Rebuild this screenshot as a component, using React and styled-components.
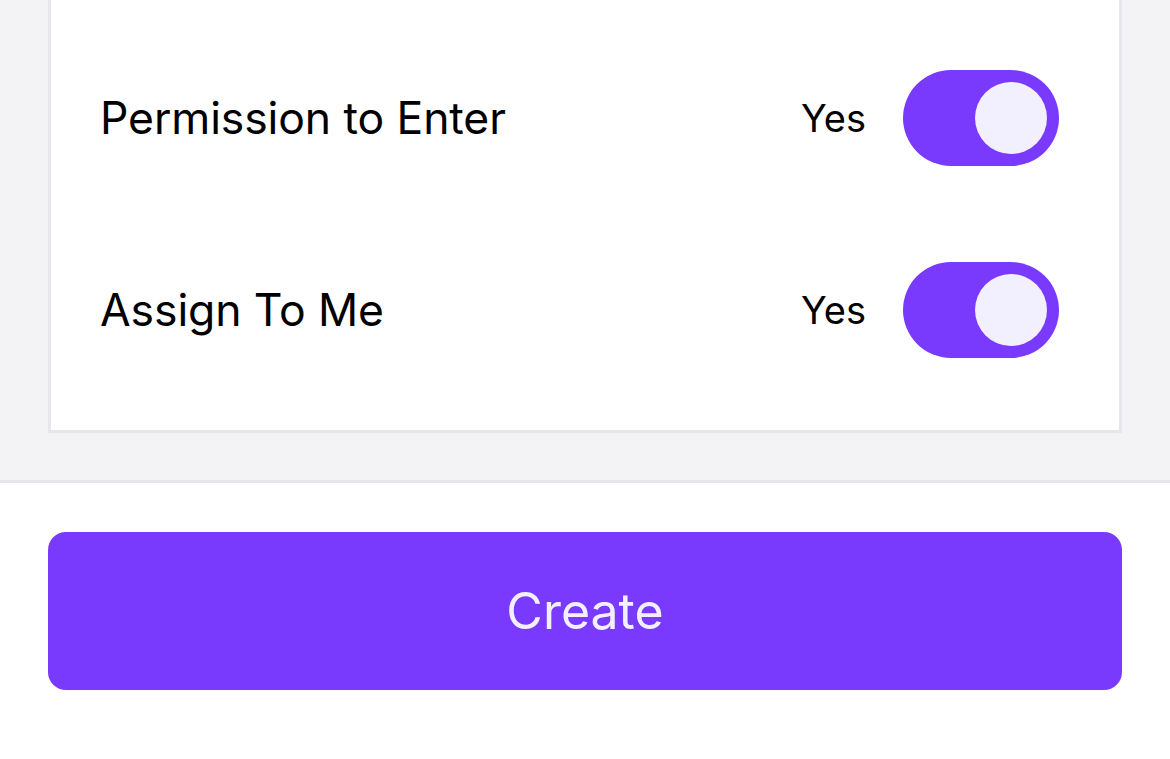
import React, { useState } from 'react';
import styled, { createGlobalStyle } from 'styled-components';

const GlobalStyle = createGlobalStyle`
  html, body {
    margin: 0;
    padding: 0;
    background: #ffffff;
  }
  body {
    font-family: Inter, "Noto Sans", "Liberation Sans", sans-serif;
    color: #000000;
  }
`;

const Page = styled.div`
  width: 1170px;
  height: 759px;
  overflow: hidden;
  display: flex;
  flex-direction: column;
`;

const Body = styled.div`
  background: #f3f3f6;
  padding: 0 48px 47px;
  border-bottom: 3px solid #e6e6ec;
`;

const Card = styled.div`
  background: #ffffff;
  border: 3px solid #e6e6ec;
  border-top: none;
  padding: 70px 60px 72px 49px;
  display: flex;
  flex-direction: column;
  gap: 96px;
`;

const Row = styled.div`
  display: flex;
  align-items: center;
  height: 96px;
`;

const Label = styled.span`
  flex: 1;
  font-size: 44.5px;
  letter-spacing: -0.1px;
`;

const Value = styled.span`
  font-size: 38px;
  margin-right: 37px;
`;

const Track = styled.button`
  width: 156px;
  height: 96px;
  border: none;
  border-radius: 48px;
  padding: 12px;
  background: ${p => (p.$on ? '#7a3afd' : '#d9d9e0')};
  display: flex;
  justify-content: ${p => (p.$on ? 'flex-end' : 'flex-start')};
  cursor: pointer;
`;

const Knob = styled.span`
  width: 72px;
  height: 72px;
  border-radius: 50%;
  background: #f2f0fe;
`;

const Footer = styled.div`
  flex: 1;
  background: #ffffff;
  padding: 49px 48px 0;
`;

const CreateBtn = styled.button`
  width: 100%;
  height: 158px;
  border: none;
  border-radius: 18px;
  background: #7a3afd;
  color: #f2f0fe;
  font-family: Inter, "Noto Sans", "Liberation Sans", sans-serif;
  font-size: 50px;
  cursor: pointer;
`;

function ToggleRow({ label, initial = true }) {
  const [on, setOn] = useState(initial);
  return (
    <Row>
      <Label>{label}</Label>
      <Value>{on ? 'Yes' : 'No'}</Value>
      <Track $on={on} onClick={() => setOn(!on)}>
        <Knob />
      </Track>
    </Row>
  );
}

export default function App() {
  return (
    <Page>
      <GlobalStyle />
      <Body>
        <Card>
          <ToggleRow label="Permission to Enter" />
          <ToggleRow label="Assign To Me" />
        </Card>
      </Body>
      <Footer>
        <CreateBtn>Create</CreateBtn>
      </Footer>
    </Page>
  );
}
